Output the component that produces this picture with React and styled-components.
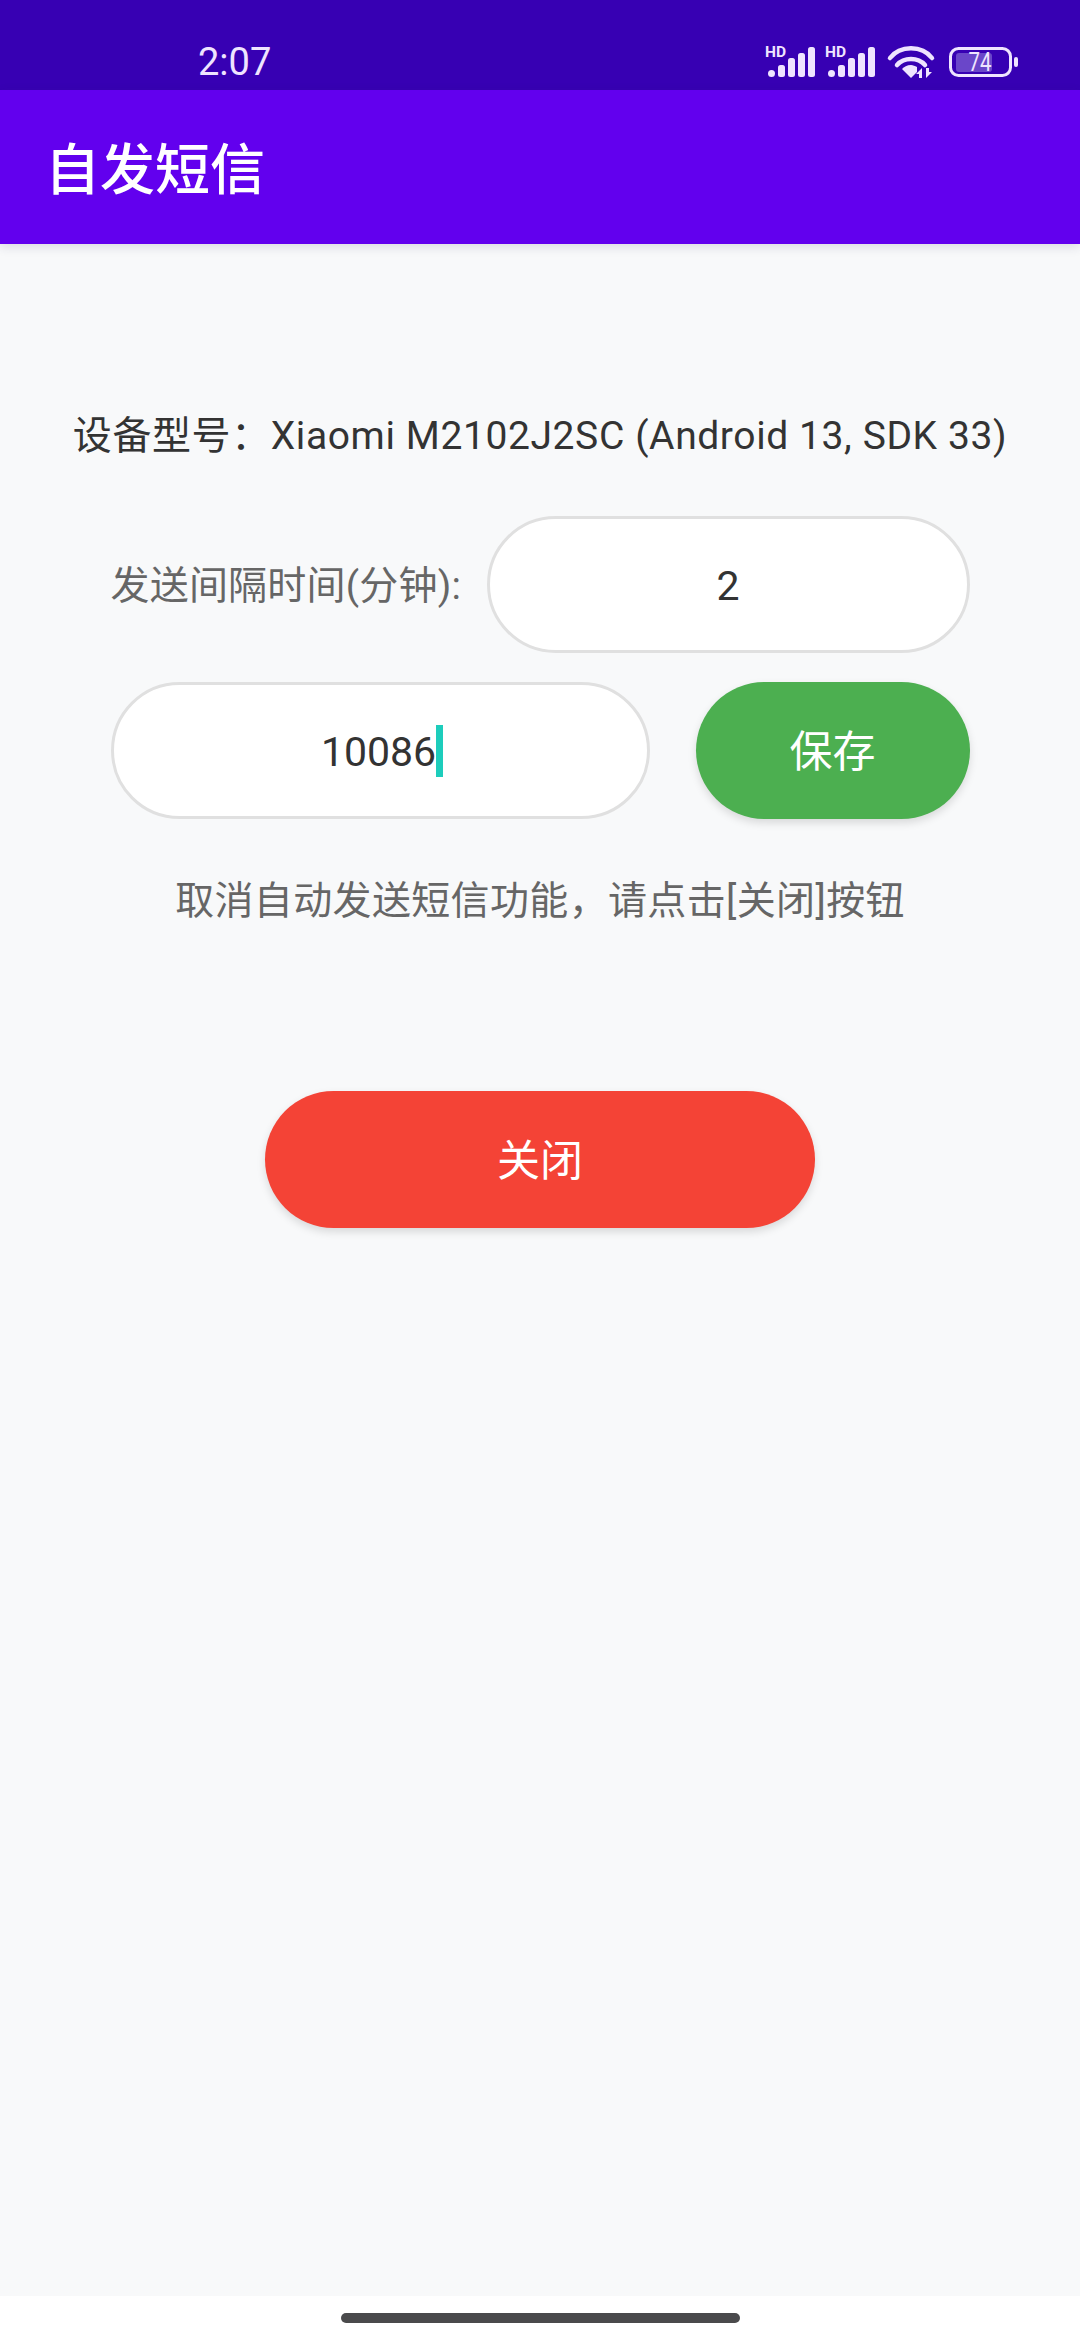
import React from "react";
import styled, { createGlobalStyle } from "styled-components";

const FONT = `Roboto, "Noto Sans CJK SC", sans-serif`;

const Global = createGlobalStyle`
  html, body { margin: 0; padding: 0; background: #fff; }
  body { font-family: ${FONT}; }
`;

const Page = styled.div`
  width: 1080px;
  height: 2340px;
  display: flex;
  flex-direction: column;
  overflow: hidden;
`;

const StatusBar = styled.div`
  height: 90px;
  flex: none;
  background: #3700b3;
  color: #efe4ff;
  display: flex;
  align-items: flex-start;
  justify-content: space-between;
  padding: 40px 54px 0 198px;
  box-sizing: border-box;
`;

const Clock = styled.span`
  font-size: 38px;
  line-height: 44px;
`;

const StatusIcons = styled.svg`
  display: block;
  width: 264px;
  height: 50px;
  margin-top: -5px;
`;

const AppBar = styled.header`
  height: 154px;
  flex: none;
  background: #6200ee;
  color: #fff;
  display: flex;
  align-items: center;
  padding: 5px 0 0 45px;
  box-sizing: border-box;
  box-shadow: 0 3px 10px rgba(40, 40, 90, 0.14);
  position: relative;
`;

const Title = styled.h1`
  margin: 0;
  font-size: 55px;
  font-weight: 500;
  line-height: 60px;
`;

const Main = styled.main`
  flex: 1;
  background: #f8f9fa;
  display: flex;
  flex-direction: column;
  align-items: center;
  padding-top: 160px;
`;

const DeviceInfo = styled.div`
  font-size: 39px;
  line-height: 64px;
  letter-spacing: 0.6px;
  color: #333;
  margin-bottom: 48px;
  white-space: nowrap;
`;

const Form = styled.div`
  width: 859px;
  display: flex;
  flex-direction: column;
  gap: 29px;
`;

const Row = styled.div`
  display: flex;
  align-items: center;
  justify-content: space-between;
`;

const Label = styled.span`
  font-size: 39px;
  letter-spacing: 0.2px;
  padding-bottom: 5px;
  color: #666;
  white-space: nowrap;
`;

const Field = styled.div`
  height: 137px;
  box-sizing: border-box;
  background: #fff;
  border: 3px solid #e0e0e0;
  border-radius: 69px;
  padding: 3px 0 0 ${(p) => p.$inset || 0}px;
  display: flex;
  align-items: center;
  justify-content: center;
  font-size: 41px;
  color: #333;
  width: ${(p) => p.$width}px;
  flex: none;
`;

const Caret = styled.span`
  display: inline-block;
  width: 7px;
  height: 52px;
  margin-bottom: 3px;
  background: #1dcdbc;
`;

const Pill = styled.button`
  border: none;
  padding: 0 0 5px;
  height: 137px;
  border-radius: 69px;
  color: #fff;
  font-family: ${FONT};
  font-size: 43px;
  background: ${(p) => p.$color};
  width: ${(p) => p.$width}px;
  flex: none;
  box-shadow: 0 4px 8px rgba(0, 0, 0, 0.13);
`;

const Hint = styled.p`
  margin: 52px 0 0;
  font-size: 39px;
  line-height: 60px;
  letter-spacing: 0.35px;
  color: #666;
  white-space: nowrap;
`;

const CloseButton = styled(Pill)`
  margin-top: 160px;
`;

const NavBar = styled.div`
  height: 44px;
  flex: none;
  background: #fff;
  display: flex;
  justify-content: center;
  padding-top: 17px;
  box-sizing: border-box;
`;

const NavPill = styled.div`
  width: 399px;
  height: 10px;
  border-radius: 5px;
  background: #4a4a4c;
`;

const Signal = ({ x }) => (
  <g transform={`translate(${x} 0)`} fill="#efe4ff">
    <text x="-3" y="12" fontSize="15.5" fontWeight="700" fontFamily="Roboto, sans-serif">HD</text>
    <rect x="0" y="25" width="7" height="7" rx="3.5" />
    <rect x="10" y="20" width="7" height="12" rx="2.5" />
    <rect x="20" y="13" width="7" height="19" rx="2.5" />
    <rect x="30" y="8" width="7" height="24" rx="2.5" />
    <rect x="40" y="2" width="7" height="30" rx="2.5" />
  </g>
);

export default function App() {
  return (
    <Page>
      <Global />
      <StatusBar>
        <Clock>2:07</Clock>
        <StatusIcons viewBox="-4 -10 264 50">
          <Signal x={2} />
          <Signal x={62} />
          <g fill="none" stroke="#efe4ff" strokeWidth="4.5" strokeLinecap="round">
            <path d="M124 13 C134 0 156 0 166 13" />
            <path d="M131 20 C138 12 152 12 159 20" />
          </g>
          <path d="M145 20 C141 20 138 22 136 24 L145 33 L151 27 L151 22 C149 21 147 20 145 20 Z" fill="#efe4ff" />
          <path d="M156 33 V23 L150 29 H153 V33 Z M160 23 V33 L166 27 H163 V23 Z" fill="#efe4ff" />
          <rect x="184.5" y="3.5" width="60" height="27" rx="8" fill="none" stroke="#efe4ff" strokeWidth="3" />
          <rect x="190" y="8" width="36" height="19" rx="3" fill="#6a46c9" />
          <text x="214" y="26" textAnchor="middle" fontSize="25" textLength="23" lengthAdjust="spacingAndGlyphs" fontFamily="Roboto, sans-serif" fill="#efe4ff">74</text>
          <rect x="248" y="12" width="4" height="10" rx="2" fill="#efe4ff" />
        </StatusIcons>
      </StatusBar>
      <AppBar>
        <Title>自发短信</Title>
      </AppBar>
      <Main>
        <DeviceInfo>设备型号：Xiaomi M2102J2SC (Android 13, SDK 33)</DeviceInfo>
        <Form>
          <Row>
            <Label>发送间隔时间(分钟):</Label>
            <Field $width={483}>2</Field>
          </Row>
          <Row>
            <Field $width={539} $inset={4}>
              10086
              <Caret />
            </Field>
            <Pill $color="#4caf50" $width={274}>保存</Pill>
          </Row>
        </Form>
        <Hint>取消自动发送短信功能，请点击[关闭]按钮</Hint>
        <CloseButton $color="#f44336" $width={550}>关闭</CloseButton>
      </Main>
      <NavBar>
        <NavPill />
      </NavBar>
    </Page>
  );
}
